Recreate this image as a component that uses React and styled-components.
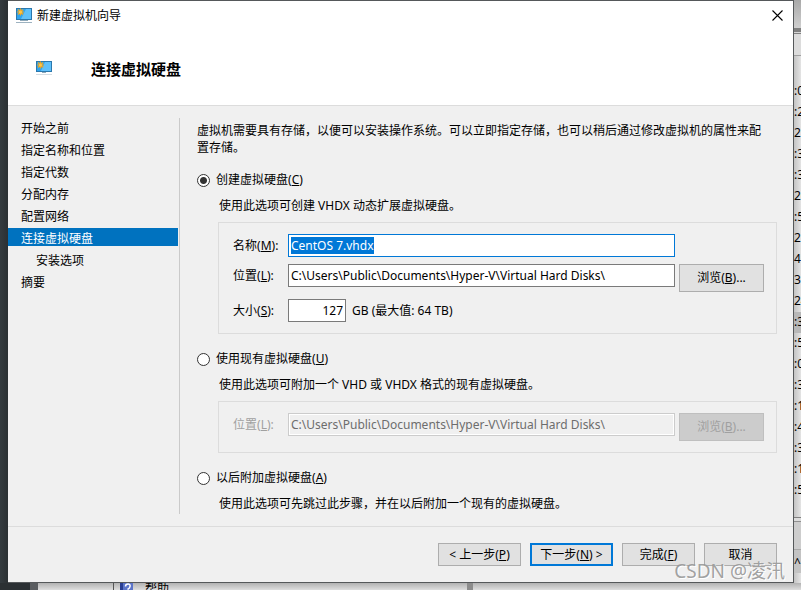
import React, { useEffect, useRef } from 'react'
import styled, { createGlobalStyle, css } from 'styled-components'

const accent = '#0078d7'
const surface = '#f0f0f0'
const line = '#dcdcdc'
const fontStack = '"Noto Sans", "Noto Sans CJK SC", sans-serif'

const steps = [
  { label: '开始之前' },
  { label: '指定名称和位置' },
  { label: '指定代数' },
  { label: '分配内存' },
  { label: '配置网络' },
  { label: '连接虚拟硬盘', current: true },
  { label: '安装选项', nested: true },
  { label: '摘要' },
]

const backgroundRows = [
  ':0', ':2', '2', ':3', ':3', '26', ':5', '2', '4', '3',
  '24', ':3', ':5', ':0', ':3', ':1', ':4', ':3', ':1', ':5',
]
const selectedRow = 11

const diskFolder = 'C:\\Users\\Public\\Documents\\Hyper-V\\Virtual Hard Disks\\'

const GlobalStyle = createGlobalStyle`
  * {
    box-sizing: border-box;
  }
  body {
    margin: 0;
    background: #dedede;
    color: #000;
    font: 12px/16px ${fontStack};
  }
  button, input {
    font: inherit;
    color: inherit;
  }
  ::selection {
    background: ${accent};
    color: #fff;
  }
`

/* Desktop behind the wizard */

const Desktop = styled.div`
  position: relative;
  display: grid;
  grid-template-columns: 8px minmax(0, 1fr) 7px;
  grid-template-rows: 1fr 7px;
  min-height: 100vh;
  overflow: hidden;
`

const DarkEdge = styled.div`
  background: linear-gradient(to right, #343b3f, #2b3033);
`

const ListEdge = styled.div`
  display: flex;
  flex-direction: column;
  width: 7px;
  overflow: hidden;
  background: linear-gradient(to right, #c4c4c4, #e4e4e4);
`

const ListTop = styled.div`
  height: 81px;
  background: linear-gradient(
    to bottom,
    #a9a9a9 0,
    #cfcfcf 28px,
    #808080 28px,
    #808080 32px,
    #d6d6d6 32px,
    #d6d6d6 33px,
    #808080 33px,
    #808080 34px,
    #dcdcdc 34px,
    #dcdcdc 55px,
    #a0a0a0 55px,
    #a0a0a0 56px,
    transparent 56px
  );
`

const ListRow = styled.div`
  height: 21px;
  line-height: 20px;
  white-space: nowrap;
  background: ${({ $selected }) => ($selected ? '#b8b8b8' : 'transparent')};
`

const ListFoot = styled.div`
  display: flex;
  align-items: center;
  height: 56px;
  margin-top: 16px;
  padding-top: 34px;
  border-top: 1px solid #808080;
  background: linear-gradient(
    to bottom,
    #dcdcdc 0,
    #dcdcdc 3px,
    #909090 3px,
    #909090 4px,
    #cdcdcd 4px,
    #cdcdcd 31px,
    #a8a8a8 31px,
    #a8a8a8 32px,
    #c3c3c3 32px
  );
`

const BottomEdge = styled.div`
  grid-column: 1 / -1;
  display: flex;
  height: 7px;
  overflow: hidden;
  background: linear-gradient(to bottom, #b2b2b2, #dedede);
`

const EdgeBlock = styled.div`
  flex: 0 0 ${({ $width }) => $width}px;
  background: ${({ $color }) => $color};
`

const HelpEntry = styled.div`
  display: flex;
  flex: 0 0 354px;
  gap: 12px;
  padding-left: 6px;
  border-left: 1px solid #555;
  white-space: nowrap;
  line-height: 12px;
`

/* Wizard window */

const Dialog = styled.section`
  display: flex;
  flex-direction: column;
  border: solid #55585a;
  border-width: 1px 1px 1px 0;
  background: ${surface};
`

const TitleBar = styled.header`
  display: flex;
  align-items: center;
  gap: 5px;
  height: 29px;
  padding: 0 10px 0 8px;
  background: #fff;
`

const WindowTitle = styled.span`
  flex: 1;
`

const CloseButton = styled.button`
  display: flex;
  padding: 0;
  border: 0;
  background: none;
`

const Banner = styled.div`
  display: flex;
  align-items: center;
  gap: 39px;
  height: 76px;
  padding: 2px 28px 0;
  border-bottom: 1px solid ${line};
  background: #fff;
`

const Heading = styled.h1`
  margin: 0;
  font-size: 15px;
  line-height: 20px;
  font-weight: 700;
`

const Body = styled.div`
  display: flex;
  flex: 1;
  padding: 12px 16px 12px 0;
`

const StepList = styled.ol`
  display: flex;
  flex-direction: column;
  gap: 4px;
  flex: 0 0 172px;
  margin: 0;
  padding: 0 1px 0 0;
  border-right: 1px solid #cacaca;
  list-style: none;
`

const Step = styled.li`
  height: 18px;
  padding-left: ${({ $nested }) => ($nested ? 28 : 13)}px;
  line-height: 22px;

  ${({ $current }) => $current && css`
    background: #0072bf;
    color: #fff;
  `}
`

const Content = styled.form`
  flex: 1;
  min-width: 0;
  padding: 4px 0 0 17px;
`

const Intro = styled.p`
  margin: 0 12px 16px 0;
  line-height: 17px;
`

const Option = styled.div`
  margin-bottom: 17px;

  &:last-child {
    margin-bottom: 0;
  }
`

const OptionLabel = styled.label`
  display: flex;
  align-items: center;
  gap: 6px;
  height: 16px;
`

const Radio = styled.input`
  appearance: none;
  width: 13px;
  height: 13px;
  margin: 0;
  border: 1px solid #333;
  border-radius: 50%;
  background: #fff;

  &:checked {
    background: radial-gradient(circle, #333 0, #333 3px, #fff 4px);
  }
`

const Description = styled.p`
  margin: 10px 0 0 22px;
`

const Group = styled.div`
  display: grid;
  grid-template-columns: 51px minmax(0, 1fr) 85px;
  align-items: start;
  gap: 7px 4px;
  margin: 8px 0 0 21px;
  padding: 11px 12px 11px 14px;
  border: 1px solid ${line};
`

const FieldLabel = styled.label`
  line-height: 23px;
  white-space: nowrap;
  color: ${({ $disabled }) => ($disabled ? '#a0a0a0' : 'inherit')};
`

const TextField = styled.input`
  width: 100%;
  height: 23px;
  padding: 0 2px;
  border: 1px solid #7a7a7a;
  border-radius: 0;
  background: #fff;
  outline: none;

  &:focus {
    border-color: ${accent};
  }

  &:disabled {
    border-color: #ccc;
    box-shadow: inset 0 0 0 1px #fff;
    background: ${surface};
    color: #6d6d6d;
  }
`

const SizeField = styled(TextField)`
  width: 58px;
  text-align: right;
`

const SizeRow = styled.div`
  display: flex;
  grid-column: 2 / -1;
  align-items: center;
  gap: 6px;
`

const Button = styled.button`
  height: 23px;
  padding: 0;
  border: ${({ $primary }) => ($primary ? `2px solid ${accent}` : '1px solid #adadad')};
  background: #e1e1e1;
  white-space: nowrap;

  &:disabled {
    border-color: #bfbfbf;
    background: #ccc;
    color: #a0a0a0;
  }
`

const BrowseButton = styled(Button)`
  height: 28px;
`

const Footer = styled.footer`
  display: flex;
  justify-content: flex-end;
  gap: 9px;
  padding: 16px;
  border-top: 1px solid ${line};
`

const FooterButton = styled(Button)`
  width: ${({ $wide }) => ($wide ? 83 : 73)}px;
`

const Watermark = styled.div`
  position: absolute;
  right: 16px;
  bottom: 6px;
  font-size: 19px;
  line-height: 26px;
  color: rgba(150, 150, 150, 0.9);
  text-shadow: 1px 1px 0 #fff;
  pointer-events: none;
`

const WizardIcon = ({ small }) => (
  <svg width="16" height="16" viewBox="0 0 16 16" aria-hidden="true">
    <rect x="0.5" y="0.5" width="15" height={small ? 10 : 11} fill="#2fa4ee" stroke="#2b78ad" />
    <path d={small ? 'M9 1h6v9H5z' : 'M10 1h5v10H5z'} fill="#5fc0fa" />
    <path d="M4.5 0.500v7M1 4h7M2 1.500l5 5M7 1.500l-5 5" stroke="#f3a51c" strokeWidth="1.2" />
    <circle cx="4.500" cy="4" r="1.6" fill="#ffc445" />
    <path d={small ? 'M6 11.500h4' : 'M4 12.500h8'} stroke="#8fa9ba" />
    <path d={small ? 'M0 13.500h16' : 'M0 14.500h16'} stroke={small ? '#d5dde3' : '#9db2c0'} />
  </svg>
)

const HelpIcon = () => (
  <svg width="13" height="14" viewBox="0 0 13 14" aria-hidden="true">
    <rect width="13" height="14" fill="#5b74c9" />
    <rect width="3" height="14" fill="#2a3f94" />
    <path d="M5.500 3.500Q5.500 1 8 1t2 2.500Q10 5 7.500 6.500" fill="none" stroke="#fff" strokeWidth="1.5" />
  </svg>
)

const CloseIcon = () => (
  <svg width="11" height="11" viewBox="0 0 11 11" aria-hidden="true">
    <path d="M.5.5l10 10M10.500.5l-10 10" stroke="#000" strokeWidth="1.100" />
  </svg>
)

/** Access key shown behind a caption, e.g. (B). */
const Key = ({ children }) => <>(<u>{children}</u>)</>

const App = () => {
  const nameField = useRef(null)

  useEffect(() => {
    nameField.current.focus()
    nameField.current.select()
  }, [])

  return (
    <Desktop>
      <GlobalStyle />
      <DarkEdge />
      <Dialog aria-label="新建虚拟机向导">
        <TitleBar>
          <WizardIcon />
          <WindowTitle>新建虚拟机向导</WindowTitle>
          <CloseButton type="button"><CloseIcon /></CloseButton>
        </TitleBar>
        <Banner>
          <WizardIcon small />
          <Heading>连接虚拟硬盘</Heading>
        </Banner>
        <Body>
          <StepList>
            {steps.map(({ label, current, nested }) => (
              <Step key={label} $current={current} $nested={nested}>{label}</Step>
            ))}
          </StepList>
          <Content>
            <Intro>
              虚拟机需要具有存储，以便可以安装操作系统。可以立即指定存储，也可以稍后通过修改虚拟机的属性来配置存储。
            </Intro>
            <Option>
              <OptionLabel>
                <Radio type="radio" name="disk" defaultChecked />
                <span>创建虚拟硬盘<Key>C</Key></span>
              </OptionLabel>
              <Description>使用此选项可创建 VHDX 动态扩展虚拟硬盘。</Description>
              <Group>
                <FieldLabel htmlFor="disk-name">名称<Key>M</Key>:</FieldLabel>
                <TextField id="disk-name" ref={nameField} defaultValue="CentOS 7.vhdx" spellCheck={false} />
                <span />
                <FieldLabel htmlFor="disk-folder">位置<Key>L</Key>:</FieldLabel>
                <TextField id="disk-folder" defaultValue={diskFolder} />
                <BrowseButton type="button">浏览<Key>B</Key>...</BrowseButton>
                <FieldLabel htmlFor="disk-size">大小<Key>S</Key>:</FieldLabel>
                <SizeRow>
                  <SizeField id="disk-size" defaultValue="127" />
                  <span>GB (最大值: 64 TB)</span>
                </SizeRow>
              </Group>
            </Option>
            <Option>
              <OptionLabel>
                <Radio type="radio" name="disk" />
                <span>使用现有虚拟硬盘<Key>U</Key></span>
              </OptionLabel>
              <Description>使用此选项可附加一个 VHD 或 VHDX 格式的现有虚拟硬盘。</Description>
              <Group>
                <FieldLabel htmlFor="existing-folder" $disabled>位置<Key>L</Key>:</FieldLabel>
                <TextField id="existing-folder" defaultValue={diskFolder} disabled />
                <BrowseButton type="button" disabled>浏览<Key>B</Key>...</BrowseButton>
              </Group>
            </Option>
            <Option>
              <OptionLabel>
                <Radio type="radio" name="disk" />
                <span>以后附加虚拟硬盘<Key>A</Key></span>
              </OptionLabel>
              <Description>使用此选项可先跳过此步骤，并在以后附加一个现有的虚拟硬盘。</Description>
            </Option>
          </Content>
        </Body>
        <Footer>
          <FooterButton type="button" $wide>&lt; 上一步<Key>P</Key></FooterButton>
          <FooterButton type="button" $wide $primary>下一步<Key>N</Key> &gt;</FooterButton>
          <FooterButton type="button">完成<Key>F</Key></FooterButton>
          <FooterButton type="button">取消</FooterButton>
        </Footer>
      </Dialog>
      <ListEdge>
        <ListTop />
        {backgroundRows.map((text, index) => (
          <ListRow key={index} $selected={index === selectedRow}>{text}</ListRow>
        ))}
        <ListFoot>^</ListFoot>
      </ListEdge>
      <BottomEdge>
        <EdgeBlock $width={30} $color="#2b3033" />
        <EdgeBlock $width={8} $color="#5a5d60" />
        <EdgeBlock $width={75} $color="transparent" />
        <HelpEntry>
          <HelpIcon />
          <span>帮助</span>
        </HelpEntry>
        <EdgeBlock $width={6} $color="#8c8c8c" />
      </BottomEdge>
      <Watermark>CSDN @凌汛</Watermark>
    </Desktop>
  )
}

export default App
